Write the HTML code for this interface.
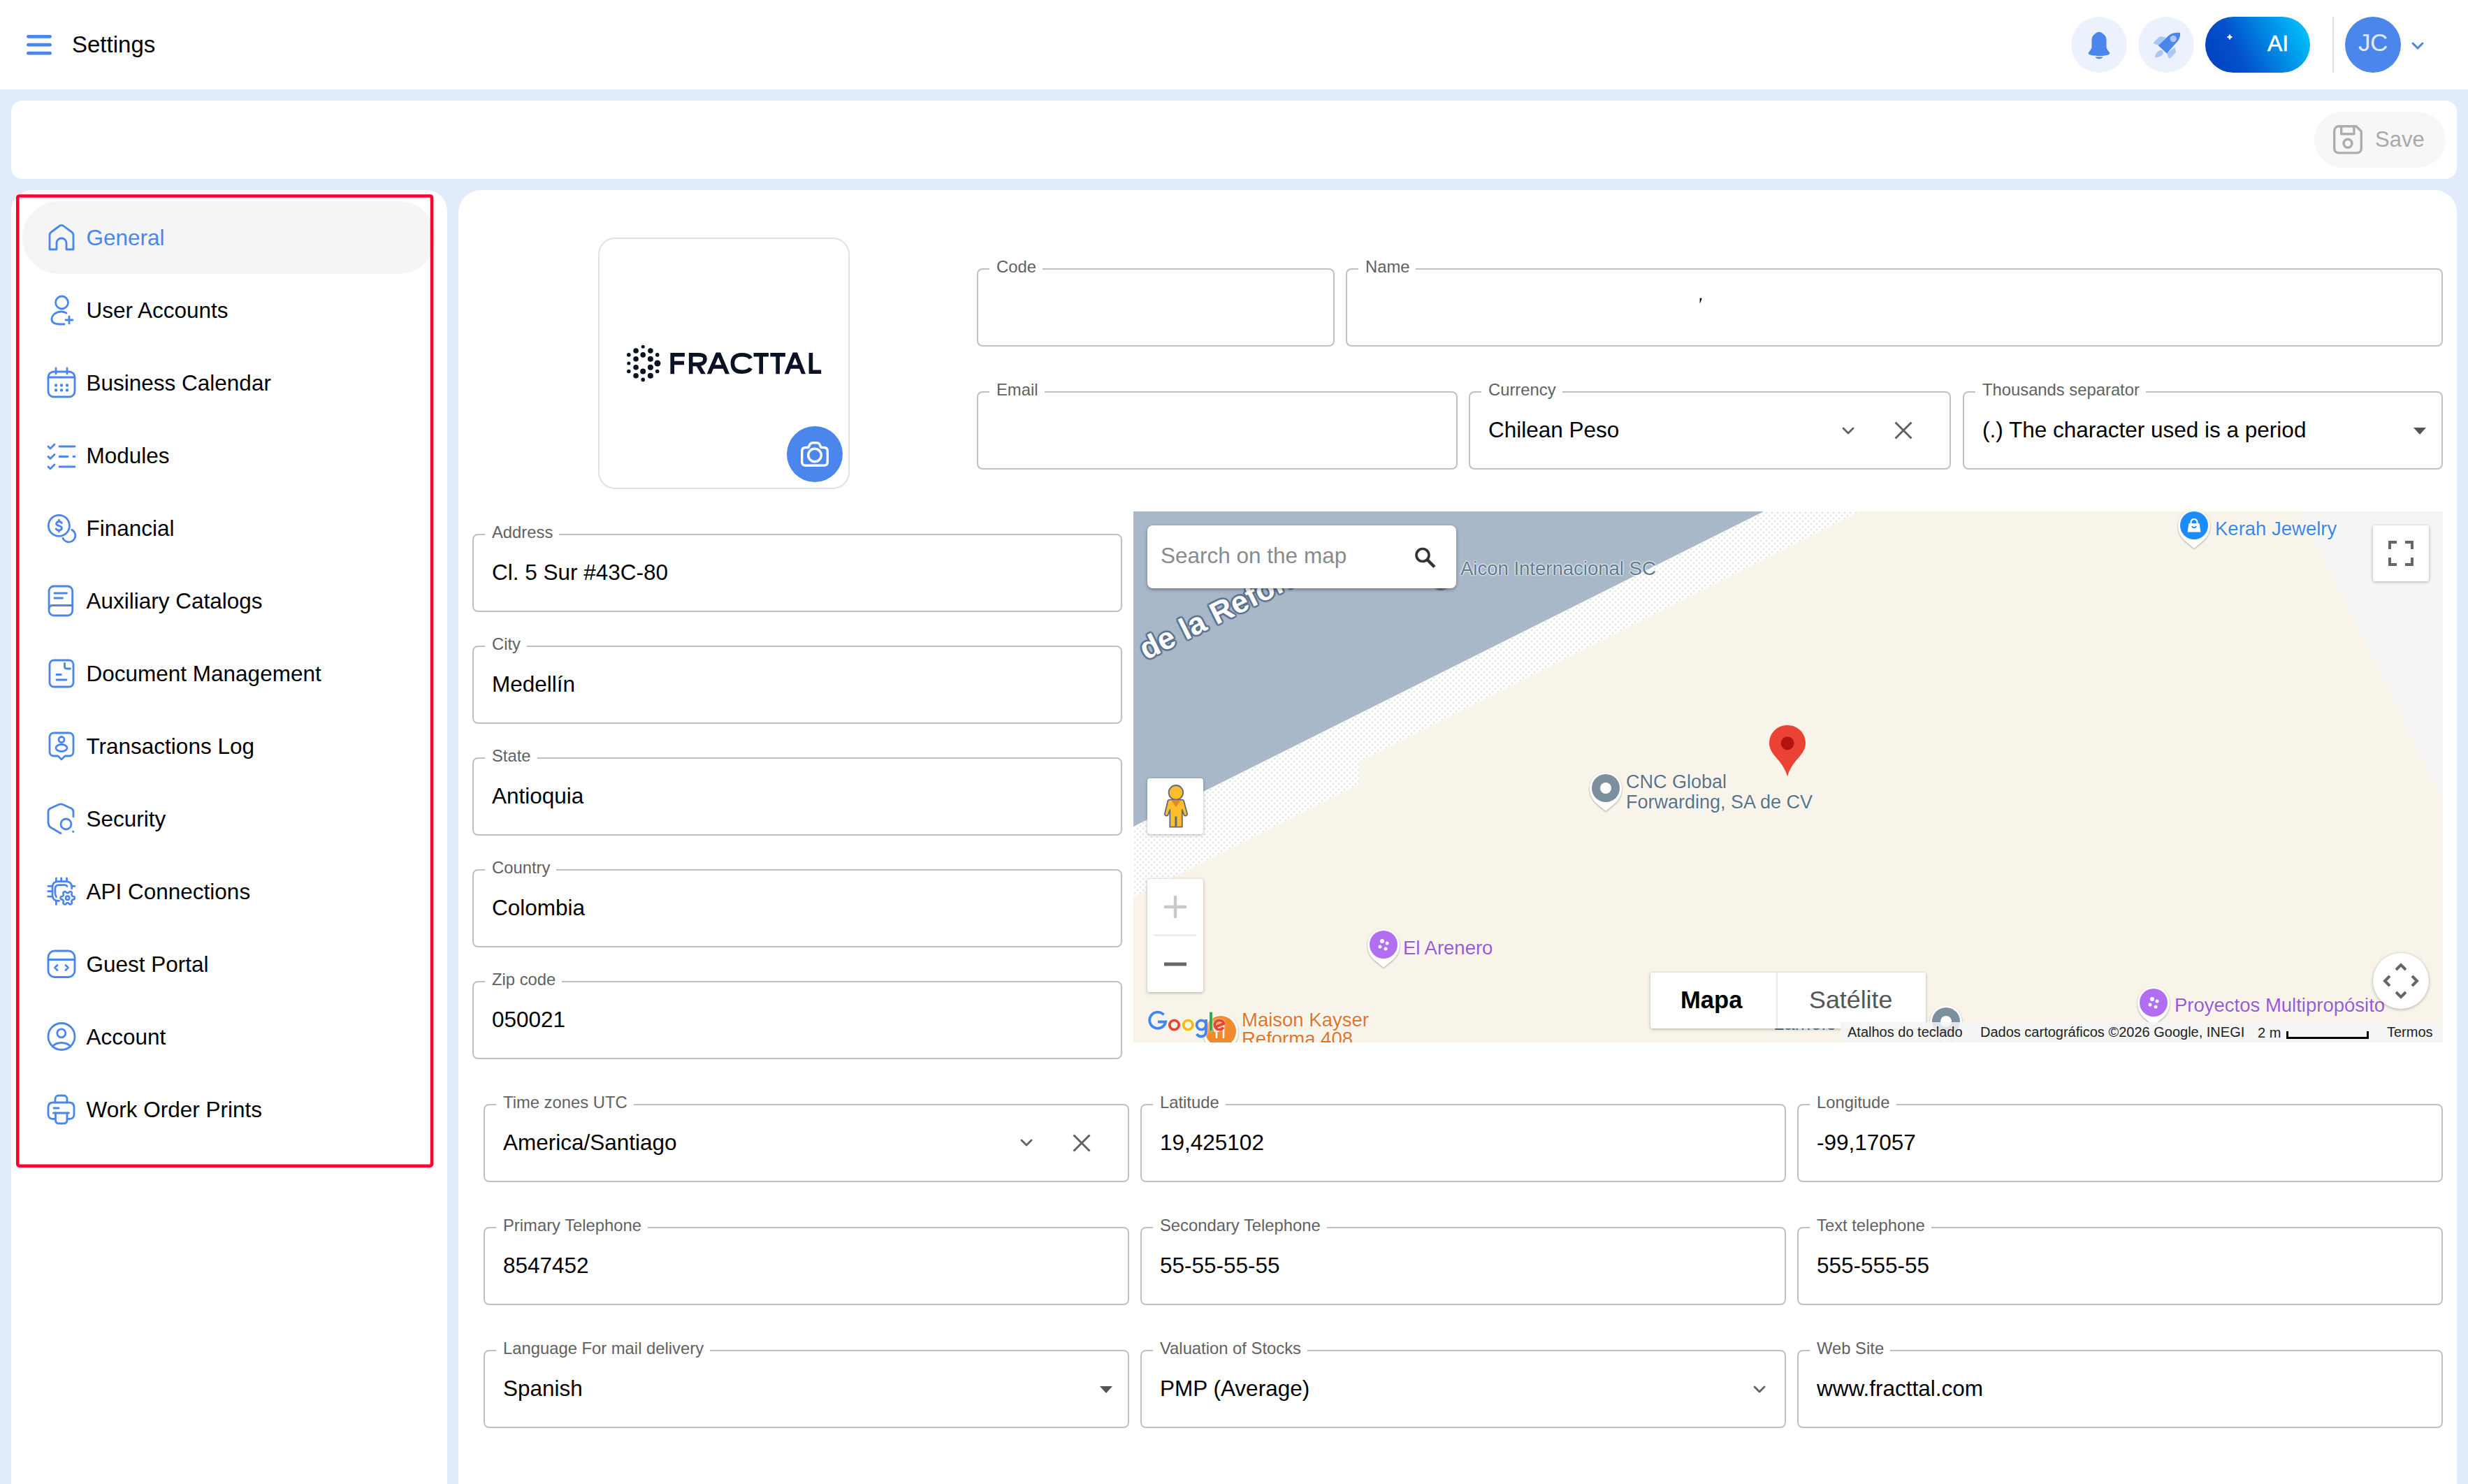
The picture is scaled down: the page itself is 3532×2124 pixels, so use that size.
<!DOCTYPE html>
<html><head><meta charset="utf-8">
<style>
*{box-sizing:border-box;margin:0;padding:0}
html,body{width:3532px;height:2124px;overflow:hidden;background:#e2ebfb;font-family:"Liberation Sans",sans-serif;color:#000}
.a{position:absolute}
.panel{background:#fff}
.nav{position:absolute;left:32px;width:591px;height:104px;line-height:104px;font-size:31.5px;white-space:nowrap}
.nav .t{position:absolute;left:91.5px;top:0}
.nav svg{position:absolute;left:36px;top:32px;width:40px;height:40px;fill:none;stroke:#4a86ec;stroke-width:2.8;stroke-linecap:round;stroke-linejoin:round;overflow:visible}
.fld{position:absolute;border:2px solid #c0c0c0;border-radius:8px;height:112px;background:#fff}
.fld .lb{position:absolute;left:16px;top:-16.5px;height:24px;line-height:24px;font-size:23.8px;color:#616161;background:#fff;padding:0 9px 0 10px;white-space:nowrap}
.fld .v{position:absolute;left:26px;top:-1px;line-height:108px;font-size:31.5px;white-space:nowrap}
.fld svg{position:absolute;overflow:visible}
</style></head>
<body>
<div class="a" style="left:0;top:0;width:3532px;height:128px;background:#fff"></div>
<svg class="a" style="left:36px;top:46px" width="40" height="36" viewBox="0 0 40 36"><g stroke="#4a86ec" stroke-width="4.7" stroke-linecap="round"><line x1="4.4" y1="6.3" x2="35.6" y2="6.3"/><line x1="4.4" y1="18.2" x2="35.6" y2="18.2"/><line x1="4.4" y1="30.2" x2="35.6" y2="30.2"/></g></svg>
<div class="a" style="left:103px;top:42px;font-size:33px;line-height:44px">Settings</div>
<div class="a" style="left:2964px;top:24px;width:80px;height:80px;border-radius:40px;background:#ebf1fd"></div>
<svg class="a" style="left:2964px;top:24px" width="80" height="80" viewBox="0 0 80 80"><path fill="#4a86ec" d="M40 21.7 C37.5 21.7 36 23 34 24.6 C31 27 29.5 29.5 29.5 33.5 V42.5 C29.5 45 28.5 46.5 27 48.5 C25.5 50.5 24.8 51 24.8 52.3 C24.8 53.8 26.5 54.5 29 55 C33 55.8 37 56.2 40 56.2 C43 56.2 47 55.8 51 55 C53.5 54.5 55.2 53.8 55.2 52.3 C55.2 51 54.5 50.5 53 48.5 C51.5 46.5 50.5 45 50.5 42.5 V33.5 C50.5 29.5 49 27 46 24.6 C44 23 42.5 21.7 40 21.7Z"/><path fill="#4a86ec" d="M34.5 57.5 H45.5 C44.5 59.3 42.5 60.3 40 60.3 C37.5 60.3 35.5 59.3 34.5 57.5Z"/></svg>
<div class="a" style="left:3060px;top:24px;width:80px;height:80px;border-radius:40px;background:#ebf1fd"></div>
<svg class="a" style="left:3060px;top:24px" width="80" height="80" viewBox="0 0 80 80"><path fill="#a9c6f7" d="M28.7 41 L23 38.5 C22 38 21.8 37 22.6 36.2 L29.5 29.3 C30.5 28.4 31.5 28 33 28.3 L39.8 29.8Z"/><path fill="#a9c6f7" d="M41 52.5 L43.5 58.5 C44 59.6 45 59.8 46 59 L52.7 52.5 C53.6 51.5 54 50.5 53.8 49.5 L52.5 43.6Z"/><path fill="#a9c6f7" d="M30 48.2 C31.5 47.3 33.5 47.5 34.8 48.8 C36.3 50.3 36.2 52.3 35.2 53.7 C33 56.5 28 58.3 24.2 58.5 C24 55 25.5 51.5 30 48.2Z"/><path fill="#4a86ec" d="M60 23 C60.5 28 58.5 32.5 55.5 36 L41 52.5 L28.7 41 L44 26.5 C48.5 23 55 22.3 60 23Z"/><circle cx="50.3" cy="31.5" r="4.7" fill="#a9c6f7"/></svg>
<div class="a" style="left:3156px;top:24px;width:150px;height:80px;border-radius:40px;background:linear-gradient(62deg,#0040bd 0%,#0450cc 32%,#0090e6 66%,#00ccff 100%)"></div>
<svg class="a" style="left:3183px;top:45px" width="16" height="16" viewBox="0 0 16 16"><path fill="#fff" d="M8 4.3 Q8.7 7.3 11.7 8 Q8.7 8.7 8 11.7 Q7.3 8.7 4.3 8 Q7.3 7.3 8 4.3Z" stroke="#fff" stroke-width="0.8" stroke-linejoin="round"/></svg>
<div class="a" style="left:3245px;top:40px;font-size:32px;line-height:44px;color:#fff;-webkit-text-stroke:0.5px #fff">AI</div>
<div class="a" style="left:3338px;top:24px;width:2px;height:80px;background:#dedede"></div>
<div class="a" style="left:3356px;top:24px;width:80px;height:80px;border-radius:40px;background:#4a86ec"></div>
<div class="a" style="left:3356px;top:39px;width:80px;text-align:center;font-size:35px;line-height:44px;letter-spacing:-0.5px;color:#e3eafc">JC</div>
<svg class="a" style="left:3446px;top:54.5px" width="26" height="20" viewBox="0 0 26 20"><path d="M7 7 L14 14 L21 7" fill="none" stroke="#4a86ec" stroke-width="3" stroke-linecap="round" stroke-linejoin="round"/></svg>
<div class="a panel" style="left:16px;top:144px;width:3500px;height:112px;border-radius:16px"></div>
<div class="a panel" style="left:16px;top:272px;width:624px;height:1900px;border-radius:30px"></div>
<div class="a panel" style="left:656px;top:272px;width:2860px;height:1900px;border-radius:32px"></div>
<div class="a" style="left:3312px;top:160px;width:188px;height:80px;border-radius:40px;background:#f7f7f7"></div>
<svg class="a" style="left:3336px;top:176px" width="48" height="48" viewBox="0 0 48 48"><g fill="none" stroke="#adadad" stroke-width="3.4" stroke-linejoin="round"><path d="M11.5 4.7 H36 L43.3 12 V36.5 C43.3 40.5 40.5 42.9 36.5 42.9 H11.5 C7.5 42.9 4.7 40.5 4.7 36.5 V11.5 C4.7 7.5 7.5 4.7 11.5 4.7Z"/><path d="M14.7 4.7 V15.7 H32.9 V4.7"/><circle cx="24" cy="29.3" r="6"/></g></svg>
<div class="a" style="left:3399px;top:178px;font-size:31px;line-height:44px;color:#a9a9a9">Save</div>
<div class="a" style="left:32px;top:288px;width:591px;height:104px;border-radius:52px;background:#f5f5f5"></div>
<div class="nav" style="top:288px;color:#4a86ec"><svg viewBox="0 0 40 40"><path d="M3 37 V16.5 C3 14.5 4 13 5.5 12 L17 3.5 C19 2 21 2 23 3.5 L34.5 12 C36 13 37 14.5 37 16.5 V37 H27 V28 C27 24 24 21 20 21 C16 21 13 24 13 28 V37 Z"/></svg><span class="t">General</span></div>
<div class="nav" style="top:392px;color:#000"><svg viewBox="0 0 40 40"><circle cx="20.5" cy="9" r="9"/><path d="M27 24 C25 23 23 22 20 22 C12 22 6 27 6 33 C6 38 11 40 18 40 H24"/><path d="M31 29 V39 M26 34 H36"/></svg><span class="t">User Accounts</span></div>
<div class="nav" style="top:496px;color:#000"><svg viewBox="0 0 40 40"><rect x="1" y="4" width="38" height="36" rx="8"/><path d="M12 -1 V7 M28 -1 V7 M1 12 H39"/><g stroke-width="4.3"><path d="M12 23.5 h0.1 M20 23.5 h0.1 M28 23.5 h0.1 M12 30.5 h0.1 M20 30.5 h0.1 M28 30.5 h0.1"/></g></svg><span class="t">Business Calendar</span></div>
<div class="nav" style="top:600px;color:#000"><svg viewBox="0 0 40 40"><path d="M1 7 L4 10 L10 4 M1 21.5 L4 24.5 L10 18.5 M1 36 L4 39 L10 33 M17 7 H39 M17 21.5 H29 M37 21.5 H39 M17 36 H39"/></svg><span class="t">Modules</span></div>
<div class="nav" style="top:704px;color:#000"><svg viewBox="0 0 40 40"><circle cx="16.4" cy="16.4" r="15"/><path d="M34.7 22.2 A9.3 9.3 0 1 1 22 34.3"/><path d="M20.3 12.6 C19.5 11.2 18.2 10.5 16.4 10.5 C14.2 10.5 12.6 11.8 12.6 13.6 C12.6 17.6 20.4 15.6 20.4 19.8 C20.4 21.7 18.8 23 16.4 23 C14.5 23 13.1 22.2 12.3 20.9 M16.4 8.3 V10.5 M16.4 23 V25" stroke-width="2.9"/></svg><span class="t">Financial</span></div>
<div class="nav" style="top:808px;color:#000"><svg viewBox="0 0 40 40"><rect x="2.1" y="-1" width="33.6" height="42" rx="7"/><path d="M2.1 31 C2.1 27.5 4 26.5 8 26.5 H35.7 M10 9 H27.5 M10 16 H21.5"/></svg><span class="t">Auxiliary Catalogs</span></div>
<div class="nav" style="top:912px;color:#000"><svg viewBox="0 0 40 40"><rect x="3" y="1" width="34" height="38" rx="6"/><path d="M24.5 5.5 V10 C24.5 12 25.5 13 27.5 13 H32.5 M13 21.5 H19.3 M13 29 H27"/></svg><span class="t">Document Management</span></div>
<div class="nav" style="top:1016px;color:#000"><svg viewBox="0 0 40 40"><path d="M9 1 H31 C34 1 37 3 37 7 V28 C37 32 34 34 31 34 H25 L20 39 L15 34 H9 C6 34 3 32 3 28 V7 C3 3 6 1 9 1Z"/><circle cx="20" cy="10.5" r="4"/><ellipse cx="20" cy="22.5" rx="8" ry="5"/></svg><span class="t">Transactions Log</span></div>
<div class="nav" style="top:1120px;color:#000"><svg viewBox="0 0 40 40"><path d="M37 17 V10 C37 7 36 6 34 5 L22 -0.5 C20 -1.3 18 -1.3 16 -0.5 L4 5 C2 6 1 7 1 10 V25 C1 28 2 30 4 32 L16 39 C17 40 18 40.5 19 40.5"/><circle cx="26.5" cy="27.5" r="7.5"/><path d="M36.5 38 L37 38.5"/></svg><span class="t">Security</span></div>
<div class="nav" style="top:1224px;color:#000"><svg viewBox="0 0 40 40"><path d="M16.6 33.3 H15 C10 33.3 7 30.3 7 25.3 V13.6 C7 8.6 10 5.6 15 5.6 H26.7 C31.7 5.6 34.7 8.6 34.7 13.6 V15.7"/><path d="M12.4 0.8 V5.6 M19.8 0.8 V5.6 M27.5 0.8 V5.6 M0.8 12.3 H7 M0.8 19.7 H7 M0.8 27.2 H7 M34.7 12.3 H39 M12.4 33.3 V38.6"/><path d="M12.6 27.5 C11.5 26 10.9 24.5 10.9 22 V16 C10.9 12.5 12.8 10.6 16.3 10.6 H24.5 C26.3 10.6 27.5 11.3 28 12.6"/><path d="M38.80 29.20 L38.75 29.73 L38.59 30.24 L38.33 30.73 L37.93 31.16 L37.01 31.43 L36.09 31.60 L35.66 31.87 L35.32 32.15 L35.06 32.44 L34.85 32.75 L34.69 33.09 L34.57 33.46 L34.49 33.89 L34.47 34.40 L34.78 35.28 L35.01 36.21 L34.84 36.78 L34.55 37.25 L34.18 37.64 L33.75 37.95 L33.27 38.17 L32.75 38.29 L32.19 38.30 L31.62 38.17 L30.93 37.51 L30.31 36.80 L29.87 36.56 L29.46 36.41 L29.07 36.33 L28.70 36.30 L28.33 36.33 L27.94 36.41 L27.53 36.56 L27.09 36.80 L26.47 37.51 L25.78 38.17 L25.21 38.30 L24.65 38.29 L24.13 38.17 L23.65 37.95 L23.22 37.64 L22.85 37.25 L22.56 36.78 L22.39 36.21 L22.62 35.28 L22.93 34.40 L22.91 33.89 L22.83 33.46 L22.71 33.09 L22.55 32.75 L22.34 32.44 L22.08 32.15 L21.74 31.87 L21.31 31.60 L20.39 31.43 L19.47 31.16 L19.07 30.73 L18.81 30.24 L18.65 29.73 L18.60 29.20 L18.65 28.67 L18.81 28.16 L19.07 27.67 L19.47 27.24 L20.39 26.97 L21.31 26.80 L21.74 26.53 L22.08 26.25 L22.34 25.96 L22.55 25.65 L22.71 25.31 L22.83 24.94 L22.91 24.51 L22.93 24.00 L22.62 23.12 L22.39 22.19 L22.56 21.62 L22.85 21.15 L23.22 20.76 L23.65 20.45 L24.13 20.23 L24.65 20.11 L25.21 20.10 L25.78 20.23 L26.47 20.89 L27.09 21.60 L27.53 21.84 L27.94 21.99 L28.33 22.07 L28.70 22.10 L29.07 22.07 L29.46 21.99 L29.87 21.84 L30.31 21.60 L30.93 20.89 L31.62 20.23 L32.19 20.10 L32.75 20.11 L33.27 20.23 L33.75 20.45 L34.18 20.76 L34.55 21.15 L34.84 21.62 L35.01 22.19 L34.78 23.12 L34.47 24.00 L34.49 24.51 L34.57 24.94 L34.69 25.31 L34.85 25.65 L35.06 25.96 L35.32 26.25 L35.66 26.53 L36.09 26.80 L37.01 26.97 L37.93 27.24 L38.33 27.67 L38.59 28.16 L38.75 28.67Z" stroke-width="2.7"/><circle cx="28.7" cy="29.2" r="2.6" stroke-width="2.6"/></svg><span class="t">API Connections</span></div>
<div class="nav" style="top:1328px;color:#000"><svg viewBox="0 0 40 40"><rect x="1" y="1" width="38" height="37.5" rx="9"/><path d="M1 13.5 H39 M14 21.5 L10.5 25 L14 28.5 M26 21.5 L29.5 25 L26 28.5"/></svg><span class="t">Guest Portal</span></div>
<div class="nav" style="top:1432px;color:#000"><svg viewBox="0 0 40 40"><circle cx="20" cy="19.5" r="19"/><circle cx="19.8" cy="14.8" r="6"/><path d="M7 34 C10 30 14.5 28.5 20 28.5 C25.5 28.5 30 30 33 34"/></svg><span class="t">Account</span></div>
<div class="nav" style="top:1536px;color:#000"><svg viewBox="0 0 40 40"><path d="M11 10 V5 C11 2 13 0 16 0 H23 C26 0 28 2 28 5 V10"/><path d="M11 33.5 H7.5 C3.5 33.5 1 31 1 27 V17 C1 12.5 3.5 10 8 10 H31 C35.5 10 38 12.5 38 17 V27 C38 31 35.5 33.5 31.5 33.5 H28"/><path d="M8.5 25 H30.5"/><path d="M11.5 25 V35 C11.5 38.5 13 40 16.5 40 H23 C26.5 40 28 38.5 28 35 V25"/><path d="M9 18 H16"/></svg><span class="t">Work Order Prints</span></div>
<svg class="a" style="left:0;top:0" width="700" height="1700"><rect x="25.25" y="280.5" width="592.8" height="1388.2" rx="2.5" fill="none" stroke="#ff0030" stroke-width="4.6"/></svg>
<div class="a" style="left:856px;top:340px;width:360px;height:360px;border:2px solid #e2e2e2;border-radius:24px;background:#fff"></div>
<svg class="a" style="left:880px;top:480px" width="310" height="80" viewBox="880 480 310 80"><g fill="#0b1224"><circle cx="920.2" cy="496.3" r="2.5"/><circle cx="910.1" cy="502" r="3.8"/><circle cx="930.9" cy="502" r="3.8"/><circle cx="899.8" cy="507.9" r="2.8"/><circle cx="920.2" cy="507.9" r="3.8"/><circle cx="940.7" cy="507.9" r="2.8"/><circle cx="910.1" cy="513.7" r="3.8"/><circle cx="930.9" cy="513.7" r="4"/><circle cx="899.8" cy="520" r="2.5"/><circle cx="940.9" cy="520" r="4.5"/><circle cx="910.1" cy="525.8" r="3.8"/><circle cx="930.9" cy="525.8" r="4"/><circle cx="899.8" cy="531.5" r="2.8"/><circle cx="920.2" cy="531.5" r="4"/><circle cx="940.7" cy="531.5" r="2.8"/><circle cx="910.1" cy="537.8" r="3.8"/><circle cx="930.9" cy="537.8" r="4"/><circle cx="920.2" cy="543.4" r="2.8"/></g><defs><clipPath id="lc"><rect x="950" y="504.6" width="240" height="30.6"/></clipPath></defs><g fill="none" stroke="#0b1224" stroke-width="5.6" stroke-linejoin="miter" clip-path="url(#lc)"><path d="M962.1999999999999 537 V507.8 H979.9 M962.1999999999999 519.5 H979"/><path d="M988.6999999999999 537 V507.8 H999 C1005.5 507.8 1009 509 1009 513.5 C1009 518 1005.5 521.5 999 521.5 H988.6999999999999 M998.5 521.5 L1008.2 538"/><path d="M1013.6 538 L1027.9 504 L1042.2 538 M1018.5 525 H1037.5"/><path d="M1074.3 513 C1072 508.5 1067 507.8 1061.5 507.8 C1053 507.8 1048.3999999999999 512 1048.3999999999999 520 C1048.3999999999999 528 1053 532.2 1061.5 532.2 C1067 532.2 1072 531.5 1074.3 527"/><path d="M1078.5 507.8 H1100 M1089.2 507.8 V537 M1102.3 507.8 H1123.9 M1113.1 507.8 V537"/><path d="M1124.6 538 L1137.8 504 L1151 538 M1129 525 H1146.5"/><path d="M1160.3999999999999 505 V532.2 H1175.2"/></g></svg>
<div class="a" style="left:1126px;top:610px;width:80px;height:80px;border-radius:40px;background:#4a86ec"></div>
<svg class="a" style="left:1126px;top:610px" width="80" height="80" viewBox="0 0 80 80"><g fill="none" stroke="#fff" stroke-width="3.4" stroke-linejoin="round"><path d="M21.7 36 C21.7 32.5 23.5 30.5 27 30.5 H31 L33 26 C34 24.5 35 23.7 37 23.7 H43 C45 23.7 46 24.5 47 26 L49 30.5 H53 C56.5 30.5 58.3 32.5 58.3 36 V51 C58.3 54.5 56.5 56.3 53 56.3 H27 C23.5 56.3 21.7 54.5 21.7 51 Z"/><circle cx="40" cy="41.5" r="9.3"/></g></svg>
<div class="fld" style="left:1398px;top:384px;width:512px"><span class="lb">Code</span><span class="v"></span></div>
<div class="fld" style="left:1926px;top:384px;width:1570px"><span class="lb">Name</span><span class="v"></span><svg style="left:0;top:0" width="600" height="60"><polygon points="504.7,40.7 507.6,40.7 506.8,43.5 505,47.9 504.6,47.9" fill="#000"/></svg></div>
<div class="fld" style="left:1398px;top:560px;width:688px"><span class="lb">Email</span><span class="v"></span></div>
<div class="fld" style="left:2102px;top:560px;width:690px"><span class="lb">Currency</span><span class="v">Chilean Peso</span><svg style="left:532px;top:49px" width="18" height="12" viewBox="0 0 18 12"><path d="M2 2 L9 9 L16 2" fill="none" stroke="#616161" stroke-width="2.8" stroke-linecap="round" stroke-linejoin="round"/></svg><svg style="left:607px;top:41px" width="26" height="26" viewBox="0 0 26 26"><path d="M1.5 1.5 L24.5 24.5 M24.5 1.5 L1.5 24.5" fill="none" stroke="#616161" stroke-width="3"/></svg></div>
<div class="fld" style="left:2809px;top:560px;width:687px"><span class="lb">Thousands separator</span><span class="v">(.) The character used is a period</span><svg style="left:643px;top:50px" width="18" height="10" viewBox="0 0 18 10"><path d="M0 0 H18 L9 10Z" fill="#555"/></svg></div>
<div class="fld" style="left:676px;top:764px;width:930px"><span class="lb">Address</span><span class="v">Cl. 5 Sur #43C-80</span></div>
<div class="fld" style="left:676px;top:924px;width:930px"><span class="lb">City</span><span class="v">Medellín</span></div>
<div class="fld" style="left:676px;top:1084px;width:930px"><span class="lb">State</span><span class="v">Antioquia</span></div>
<div class="fld" style="left:676px;top:1244px;width:930px"><span class="lb">Country</span><span class="v">Colombia</span></div>
<div class="fld" style="left:676px;top:1404px;width:930px"><span class="lb">Zip code</span><span class="v">050021</span></div>
<div class="fld" style="left:692px;top:1580px;width:924px"><span class="lb">Time zones UTC</span><span class="v">America/Santiago</span><svg style="left:766px;top:48px" width="18" height="12" viewBox="0 0 18 12"><path d="M2 2 L9 9 L16 2" fill="none" stroke="#616161" stroke-width="2.8" stroke-linecap="round" stroke-linejoin="round"/></svg><svg style="left:841px;top:41px" width="26" height="26" viewBox="0 0 26 26"><path d="M1.5 1.5 L24.5 24.5 M24.5 1.5 L1.5 24.5" fill="none" stroke="#616161" stroke-width="3"/></svg></div>
<div class="fld" style="left:1632px;top:1580px;width:924px"><span class="lb">Latitude</span><span class="v">19,425102</span></div>
<div class="fld" style="left:2572px;top:1580px;width:924px"><span class="lb">Longitude</span><span class="v">-99,17057</span></div>
<div class="fld" style="left:692px;top:1756px;width:924px"><span class="lb">Primary Telephone</span><span class="v">8547452</span></div>
<div class="fld" style="left:1632px;top:1756px;width:924px"><span class="lb">Secondary Telephone</span><span class="v">55-55-55-55</span></div>
<div class="fld" style="left:2572px;top:1756px;width:924px"><span class="lb">Text telephone</span><span class="v">555-555-55</span></div>
<div class="fld" style="left:692px;top:1932px;width:924px"><span class="lb">Language For mail delivery</span><span class="v">Spanish</span><svg style="left:880px;top:50px" width="18" height="10" viewBox="0 0 18 10"><path d="M0 0 H18 L9 10Z" fill="#555"/></svg></div>
<div class="fld" style="left:1632px;top:1932px;width:924px"><span class="lb">Valuation of Stocks</span><span class="v">PMP (Average)</span><svg style="left:875px;top:49px" width="18" height="12" viewBox="0 0 18 12"><path d="M2 2 L9 9 L16 2" fill="none" stroke="#616161" stroke-width="2.8" stroke-linecap="round" stroke-linejoin="round"/></svg></div>
<div class="fld" style="left:2572px;top:1932px;width:924px"><span class="lb">Web Site</span><span class="v">www.fracttal.com</span></div>
<div class="a" style="left:1622px;top:732px;width:1874px;height:760px;overflow:hidden;background:#f8f4ea">
<svg class="a" style="left:0;top:0" width="1874" height="760" viewBox="0 0 1874 760">
<defs><pattern id="dp" width="8" height="8" patternUnits="userSpaceOnUse"><rect width="8" height="8" fill="#fdfdfd"/><rect x="1" y="1" width="2.2" height="2.2" fill="#dfe0e5"/><rect x="5" y="5" width="2.2" height="2.2" fill="#dfe0e5"/></pattern></defs>
<polygon points="1670,0 1874,0 1874,412" fill="#f5f5f5"/>
<polygon points="902,0 1039,0 323,358 323,390 0,551.5 0,451" fill="url(#dp)"/>
<polygon points="0,0 902,0 0,451" fill="#a8b8c9"/>
</svg>
<div class="a" style="left:18px;top:173px;font-size:44px;font-weight:bold;line-height:50px;color:#fff;-webkit-text-stroke:0;paint-order:stroke fill;transform-origin:0 40px;transform:rotate(-26.5deg);white-space:nowrap;text-shadow:0 0 1px #5b7290,2.5px 0 1px #5b7290,-2.5px 0 1px #5b7290,0 2.5px 1px #5b7290,0 -2.5px 1px #5b7290,1.8px 1.8px 1px #5b7290,-1.8px 1.8px 1px #5b7290,1.8px -1.8px 1px #5b7290,-1.8px -1.8px 1px #5b7290">de la Reforma</div>
<div class="a" style="left:468px;top:67px;font-size:27.5px;line-height:30px;color:#5f7a8c;white-space:nowrap;text-shadow:0 0 2px #fff,0 0 2px #fff,0 0 3px #fff">Aicon Internacional SC</div>
<div class="a" style="left:425px;top:82px;width:30px;height:30px;border-radius:15px;background:#5d6f7c;box-shadow:0 1px 2px rgba(0,0,0,.4)"></div>
<div class="a" style="left:20px;top:20px;width:442px;height:90px;border-radius:8px;background:#fff;box-shadow:0 2px 5px rgba(0,0,0,.35)"></div>
<div class="a" style="left:39px;top:48px;font-size:31.5px;line-height:30px;color:#8a8a8a;white-space:nowrap">Search on the map</div>
<svg class="a" style="left:400px;top:48px" width="36" height="36" viewBox="0 0 36 36"><circle cx="14" cy="14.5" r="9" fill="none" stroke="#333" stroke-width="3.6"/><path d="M20.5 21 L31 31.5" stroke="#333" stroke-width="4.5"/></svg>
<svg class="a" style="left:1491.6px;top:-6px;overflow:visible" width="52" height="84" viewBox="-26 -26 52 84"><path d="M-23 0 A23 23 0 1 1 23 0 C23 18.0 10.0 24.0 0 33.0 C-10.0 24.0 -23 18.0 -23 0Z" fill="#fff" style="filter:drop-shadow(0 1px 1px rgba(0,0,0,.35))"/><circle cx="0" cy="0" r="20" fill="#1b8cfb"/><path d="M-9.5 9.5 H9.5 L7.5 -3 H-7.5Z" fill="#fff"/><path d="M-4.5 -3 V-4.5 C-4.5 -10.5 4.5 -10.5 4.5 -4.5 V-3" fill="none" stroke="#fff" stroke-width="2.2"/><path d="M-3 1 C-2 4 2 4 3 1" fill="none" stroke="#1b8cfb" stroke-width="1.8"/></svg>
<div class="a" style="left:1548px;top:10px;font-size:27.5px;line-height:30px;color:#3b87e6;white-space:nowrap;text-shadow:0 0 2px #fff,0 0 2px #fff,0 0 3px #fff">Kerah Jewelry</div>
<div class="a" style="left:1774px;top:20px;width:80px;height:80px;border-radius:3px;background:#fff;box-shadow:0 1px 4px rgba(0,0,0,.3)"></div>
<svg class="a" style="left:1774px;top:20px" width="80" height="80" viewBox="0 0 80 80"><path d="M24 34 V24 H34 M46 24 H56 V34 M56 46 V56 H46 M34 56 H24 V46" fill="none" stroke="#666" stroke-width="4"/></svg>
<div class="a" style="left:20px;top:382px;width:80px;height:80px;border-radius:4px;background:#fff;box-shadow:0 1px 4px rgba(0,0,0,.3)"></div>
<svg class="a" style="left:20px;top:382px" width="80" height="80" viewBox="0 0 80 80"><g fill="#fdbd2c" stroke="#606a78" stroke-width="1.8" stroke-linejoin="round"><path d="M29.5 31.8 C30 30.8 31 30.6 32 30.6 H49.5 C50.5 30.6 51.5 30.8 52 31.8 L57 50.5 C57.3 52 56.5 53.4 55 53.6 C54 53.8 53 53.3 52.5 52.5 L49.8 45 V69.7 H41.5 V55.3 H40.3 V69.7 H32.3 V45 L29.5 52.5 C29 53.3 28 53.8 27 53.6 C25.5 53.4 24.7 52 25 50.5Z"/><circle cx="40.9" cy="20.3" r="10.3"/></g><path d="M34.4 31.2 H47.7 L40.9 41.2Z" fill="#e3832c"/></svg>
<div class="a" style="left:20px;top:526px;width:80px;height:162px;border-radius:3px;background:#fff;box-shadow:0 1px 4px rgba(0,0,0,.3)"></div>
<svg class="a" style="left:20px;top:526px" width="80" height="162" viewBox="0 0 80 162"><path d="M40 24 V56 M24 40 H56" stroke="#c9c9c9" stroke-width="4.5"/><path d="M10 80.5 H70" stroke="#e6e6e6" stroke-width="2"/><path d="M24 122 H56" stroke="#666" stroke-width="5"/></svg>
<svg class="a" style="left:906px;top:302px" width="60" height="82" viewBox="0 0 60 82"><path d="M30 4 C44.5 4 56 15 56 29.5 C56 36 53 42 48 48 C40 57 33 66 30 77.5 C27 66 20 57 12 48 C7 42 4 36 4 29.5 C4 15 15.5 4 30 4Z" fill="#ea4335"/><circle cx="30" cy="29.8" r="9.5" fill="#b31412"/></svg>
<svg class="a" style="left:649.8px;top:369.6px;overflow:visible" width="52" height="84" viewBox="-26 -26 52 84"><path d="M-23 0 A23 23 0 1 1 23 0 C23 18.0 10.0 24.0 0 33.0 C-10.0 24.0 -23 18.0 -23 0Z" fill="#fff" style="filter:drop-shadow(0 1px 1px rgba(0,0,0,.35))"/><circle cx="0" cy="0" r="20" fill="#7b8f9c"/><circle cx="0" cy="0" r="8" fill="#fff"/></svg>
<div class="a" style="left:705px;top:373px;font-size:27px;line-height:28.5px;color:#5a7486;white-space:nowrap;text-shadow:0 0 2px #fff,0 0 2px #fff,0 0 3px #fff">CNC Global<br>Forwarding, SA de CV</div>
<svg class="a" style="left:332px;top:593.6px;overflow:visible" width="52" height="84" viewBox="-26 -26 52 84"><path d="M-23 0 A23 23 0 1 1 23 0 C23 18.0 10.0 24.0 0 33.0 C-10.0 24.0 -23 18.0 -23 0Z" fill="#fff" style="filter:drop-shadow(0 1px 1px rgba(0,0,0,.35))"/><circle cx="0" cy="0" r="20" fill="#b26ef0"/><g fill="#fff"><circle cx="-2" cy="-5" r="3"/><circle cx="5" cy="-2" r="2.5"/><circle cx="3" cy="6" r="2.5"/><circle cx="-5" cy="3" r="2.5"/></g></svg>
<div class="a" style="left:386px;top:610px;font-size:27.5px;line-height:30px;color:#9b59d6;white-space:nowrap;text-shadow:0 0 2px #fff,0 0 2px #fff,0 0 3px #fff">El Arenero</div>
<svg class="a" style="left:97px;top:716px;overflow:visible" width="56" height="88" viewBox="-28 -28 56 88"><path d="M-25 0 A25 25 0 1 1 25 0 C25 19.8 11.0 26.4 0 36.3 C-11.0 26.4 -25 19.8 -25 0Z" fill="#fff" style="filter:drop-shadow(0 1px 1px rgba(0,0,0,.35))"/><circle cx="0" cy="0" r="22" fill="#f08a2c"/><path d="M-6 -8 V10 M4 -8 V10 M-9 -8 V-2 C-9 1 -3 1 -3 -2 V-8" fill="none" stroke="#fff" stroke-width="2.5"/></svg>
<div class="a" style="left:155px;top:714px;font-size:27.5px;line-height:27px;color:#e0762a;white-space:nowrap;text-shadow:0 0 2px #fff,0 0 2px #fff,0 0 3px #fff">Maison Kayser<br>Reforma 408</div>
<svg class="a" style="left:0;top:700px;overflow:visible" width="160" height="60" viewBox="1622 1432 160 60"><g fill="none" stroke-width="3.8" style="filter:drop-shadow(0 0 1.5px #fff)"><path d="M1665.5 1452.5 A11.6 11.6 0 1 0 1668.2 1462.5 H1657" stroke="#4285f4"/><circle cx="1680.5" cy="1467" r="6.7" stroke="#ea4335"/><circle cx="1700.3" cy="1467" r="6.7" stroke="#fbbc05"/><circle cx="1719.3" cy="1467" r="6.7" stroke="#4285f4"/><path d="M1726 1459 V1476 C1726 1481 1723 1483.5 1719 1483.5 C1716 1483.5 1714 1482 1712.5 1480" stroke="#4285f4"/><path d="M1733 1448.6 V1475.5" stroke="#34a853" stroke-width="4"/><path d="M1739.5 1470 L1751.5 1465 C1750.5 1461.5 1748 1460.3 1745 1460.3 C1741.3 1460.3 1738.3 1463.3 1738.3 1467 C1738.3 1470.7 1741.3 1473.7 1745 1473.7 C1747.5 1473.7 1749.5 1472.5 1750.8 1470.5" stroke="#ea4335"/></g></svg>
<svg class="a" style="left:1434px;top:676.7px;overflow:visible" width="52" height="84" viewBox="-26 -26 52 84"><path d="M-23 0 A23 23 0 1 1 23 0 C23 18.0 10.0 24.0 0 33.0 C-10.0 24.0 -23 18.0 -23 0Z" fill="#fff" style="filter:drop-shadow(0 1px 1px rgba(0,0,0,.35))"/><circle cx="0" cy="0" r="20" fill="#b26ef0"/><g fill="#fff"><circle cx="-2" cy="-5" r="3"/><circle cx="5" cy="-2" r="2.5"/><circle cx="3" cy="6" r="2.5"/><circle cx="-5" cy="3" r="2.5"/></g></svg>
<div class="a" style="left:1490px;top:692px;font-size:27.5px;line-height:30px;color:#9b59d6;white-space:nowrap;text-shadow:0 0 2px #fff,0 0 2px #fff,0 0 3px #fff">Proyectos Multipropósito</div>
<div class="a" style="left:916px;top:718px;font-size:27.5px;line-height:30px;color:#5a7486;white-space:nowrap;text-shadow:0 0 2px #fff,0 0 2px #fff,0 0 3px #fff">Lamelo</div>
<svg class="a" style="left:1136.7px;top:704px;overflow:visible" width="52" height="84" viewBox="-26 -26 52 84"><path d="M-23 0 A23 23 0 1 1 23 0 C23 18.0 10.0 24.0 0 33.0 C-10.0 24.0 -23 18.0 -23 0Z" fill="#fff" style="filter:drop-shadow(0 1px 1px rgba(0,0,0,.35))"/><circle cx="0" cy="0" r="20" fill="#7b8f9c"/><circle cx="0" cy="0" r="8" fill="#fff"/></svg>
<div class="a" style="left:740px;top:660px;width:394px;height:80px;border-radius:3px;background:#fff;box-shadow:0 1px 4px rgba(0,0,0,.3)"></div>
<div class="a" style="left:920px;top:660px;width:2px;height:80px;background:#ebebeb"></div>
<div class="a" style="left:783px;top:679px;font-size:34.6px;line-height:40px;font-weight:bold;color:#000">Mapa</div>
<div class="a" style="left:967px;top:679px;font-size:35.8px;line-height:40px;color:#565656">Satélite</div>
<div class="a" style="left:1774px;top:632px;width:80px;height:80px;border-radius:40px;background:#fff;box-shadow:0 1px 4px rgba(0,0,0,.3)"></div>
<svg class="a" style="left:1774px;top:632px" width="80" height="80" viewBox="0 0 80 80"><path d="M33 24 L40 17 L47 24 M33 56 L40 63 L47 56 M24 33 L17 40 L24 47 M56 33 L63 40 L56 47" fill="none" stroke="#666" stroke-width="4"/></svg>
<div class="a" style="left:1012px;top:731px;width:862px;height:29px;background:rgba(245,245,245,.85)"></div>
<div class="a" style="left:1022px;top:733px;font-size:20px;line-height:24px;color:#222;white-space:nowrap">Atalhos do teclado</div>
<div class="a" style="left:1212px;top:733px;font-size:20px;line-height:24px;color:#222;white-space:nowrap">Dados cartográficos ©2026 Google, INEGI</div>
<div class="a" style="left:1609px;top:734px;font-size:20px;line-height:24px;color:#222;white-space:nowrap">2 m</div>
<div class="a" style="left:1650px;top:744px;width:118px;height:11px;border:3px solid #000;border-top:none"></div>
<div class="a" style="left:1794px;top:733px;font-size:20px;line-height:24px;color:#222;white-space:nowrap">Termos</div>
</div>
</body></html>
